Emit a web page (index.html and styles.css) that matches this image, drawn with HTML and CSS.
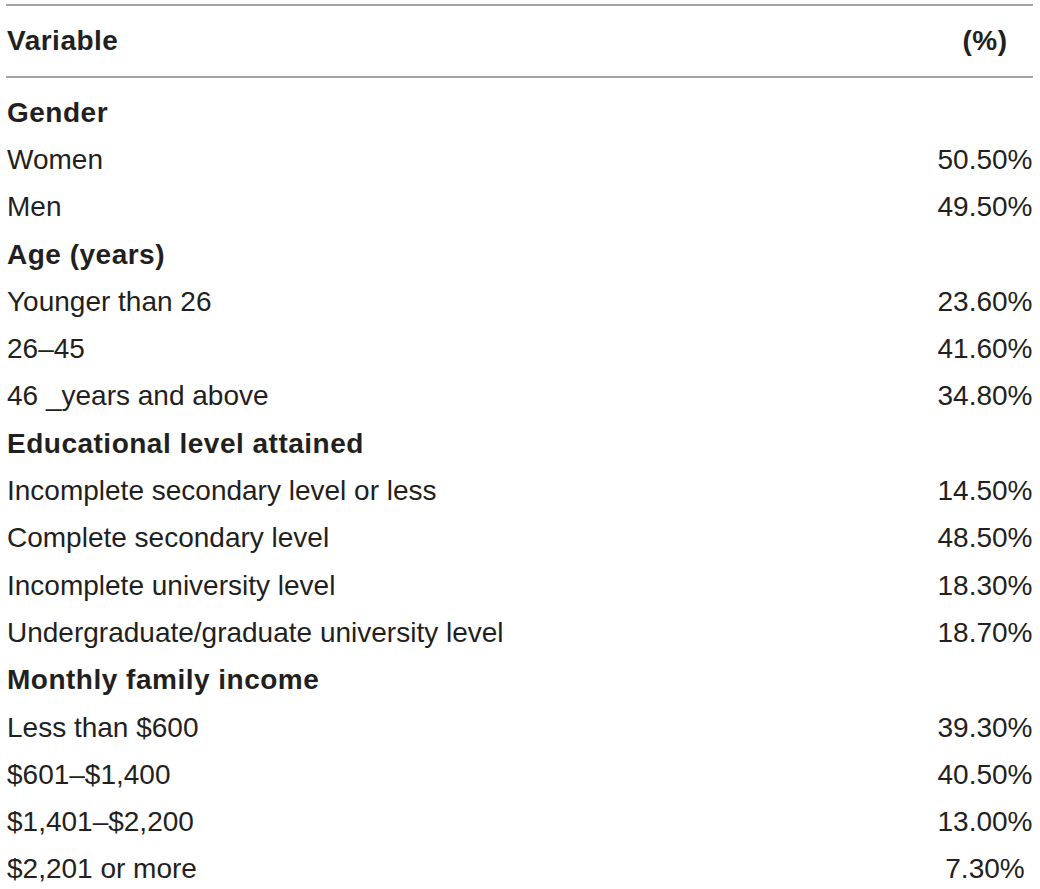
FILE: index.html
```html
<!DOCTYPE html>
<html>
<head>
<meta charset="utf-8">
<link rel="stylesheet" href="styles.css">
</head>
<body>
<div class="tbl">
  <div class="head">
    <div class="label">Variable</div><div class="val">(%)</div>
  </div>
  <div class="body">
    <div class="row grp"><div class="label">Gender</div><div class="val"></div></div>
    <div class="row"><div class="label">Women</div><div class="val">50.50%</div></div>
    <div class="row"><div class="label">Men</div><div class="val">49.50%</div></div>
    <div class="row grp"><div class="label">Age (years)</div><div class="val"></div></div>
    <div class="row"><div class="label">Younger than 26</div><div class="val">23.60%</div></div>
    <div class="row"><div class="label">26–45</div><div class="val">41.60%</div></div>
    <div class="row"><div class="label">46 _years and above</div><div class="val">34.80%</div></div>
    <div class="row grp"><div class="label">Educational level attained</div><div class="val"></div></div>
    <div class="row"><div class="label">Incomplete secondary level or less</div><div class="val">14.50%</div></div>
    <div class="row"><div class="label">Complete secondary level</div><div class="val">48.50%</div></div>
    <div class="row"><div class="label">Incomplete university level</div><div class="val">18.30%</div></div>
    <div class="row"><div class="label">Undergraduate/graduate university level</div><div class="val">18.70%</div></div>
    <div class="row grp"><div class="label">Monthly family income</div><div class="val"></div></div>
    <div class="row"><div class="label">Less than $600</div><div class="val">39.30%</div></div>
    <div class="row"><div class="label">$601–$1,400</div><div class="val">40.50%</div></div>
    <div class="row"><div class="label">$1,401–$2,200</div><div class="val">13.00%</div></div>
    <div class="row"><div class="label">$2,201 or more</div><div class="val">7.30%</div></div>
  </div>
</div>
</body>
</html>
```
FILE: styles.css
```css
html, body {
  margin: 0;
  padding: 0;
  background: #ffffff;
}
body {
  padding: 4px 7px 0 6px;
  font-family: "Liberation Sans", Arial, sans-serif;
  color: #231f20;
  font-size: 28px;
  line-height: 32px;
}
.tbl {
  width: 1027px;
}
.head {
  display: grid;
  grid-template-columns: 1fr 96px;
  align-items: center;
  height: 70px;
  border-top: 2px solid #a3a3a3;
  border-bottom: 2px solid #a3a3a3;
  font-weight: bold;
  letter-spacing: 0.5px;
}
.label {
  padding-left: 1px;
  white-space: nowrap;
}
.val {
  text-align: center;
  white-space: nowrap;
}
.body {
  padding-top: 11px;
}
.row {
  display: grid;
  grid-template-columns: 1fr 96px;
  align-items: center;
  height: 47.3px;
}
.row.grp {
  font-weight: bold;
  letter-spacing: 0.5px;
}
```
